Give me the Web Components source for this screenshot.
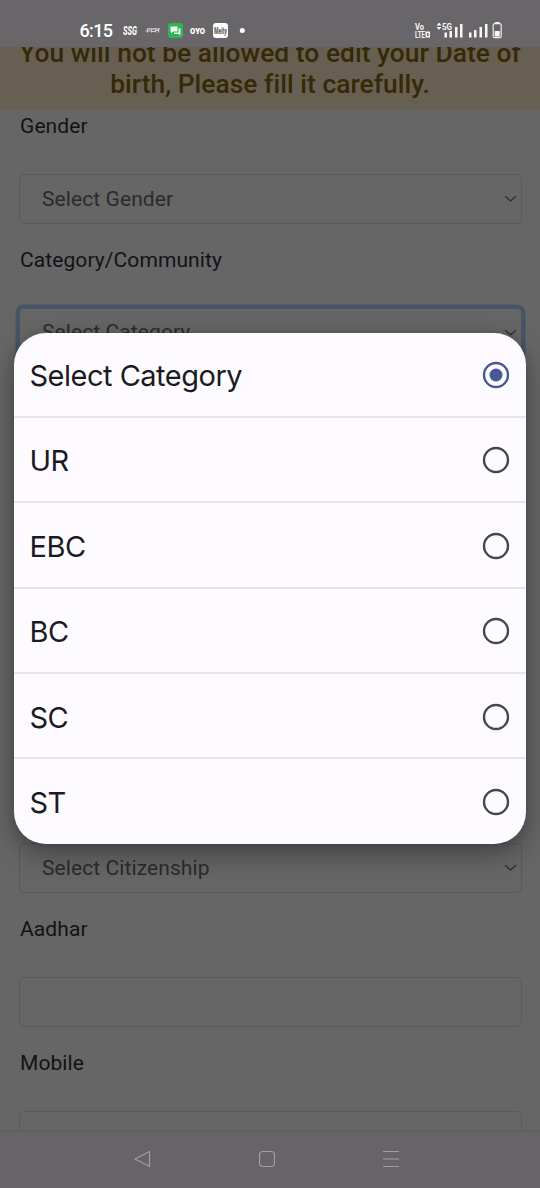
<!DOCTYPE html>
<html lang="en">
<head>
<meta charset="utf-8">
<title>Registration</title>
<style>
html,body{margin:0;height:100%;overflow:hidden;background:#666}
body{font-family:Roboto,"Liberation Sans",sans-serif}
</style>
</head>
<body>
<phone-screen>
  <status-bar slot="status"></status-bar>
  <notice-banner><span>You will not be allowed to edit your Date of</span><span slot="second">birth, Please fill it carefully.</span></notice-banner>
  <form-field label="Gender" arrow>Select Gender</form-field>
  <form-field label="Category/Community" arrow focused class="category">Select Category</form-field>
  <form-field class="citizenship" arrow>Select Citizenship</form-field>
  <form-field label="Aadhar"></form-field>
  <form-field label="Mobile"></form-field>
  <option-dialog slot="dialog">
    <option-row checked>Select Category</option-row>
    <option-row>UR</option-row>
    <option-row>EBC</option-row>
    <option-row>BC</option-row>
    <option-row>SC</option-row>
    <option-row>ST</option-row>
  </option-dialog>
  <nav-bar slot="nav"></nav-bar>
</phone-screen>
<script>
function define(name, html) {
  customElements.define(name, class extends HTMLElement {
    constructor() {
      super();
      const t = document.createElement('template');
      t.innerHTML = html;
      this.attachShadow({mode: 'open'}).append(t.content.cloneNode(true));
    }
  });
}

define('phone-screen', `<style>
:host{display:flex;flex-direction:column;position:relative;width:540px;height:1188px;overflow:hidden;background:#666}
main{flex:1;min-height:0;overflow:hidden}
::slotted(.citizenship){margin-top:465px}
</style>
<slot name="status"></slot><main><slot></slot></main><slot name="nav"></slot><slot name="dialog"></slot>`);

define('status-bar', `<style>
:host{display:flex;box-sizing:border-box;flex:none;height:47px;background:#69666a;color:#fff;padding:15px 38px 0 79.500px;justify-content:space-between}
div{display:flex;height:31px}
.time{font-size:18px;line-height:32px;height:31px;font-weight:500;letter-spacing:-.65px;width:43.500px}
svg{display:block;flex:none}
</style>
<div><span class="time">6:15</span>
<svg width="140" height="31" fill="#fff">
<text x="0" y="20" font-family="Roboto" font-style="italic" font-weight="700" font-size="12" textLength="14" lengthAdjust="spacingAndGlyphs">SSG</text>
<g stroke="#d0ced0" stroke-width="1.200" fill="none"><path d="M24 13.800H37M24.500 14v3.500M28.500 14v3.500M32.500 14v3.500M35.500 14v3.500M22.500 16h5M29 16.500h3M33 15.500h3"/></g>
<rect x="45" y="8" width="15" height="15" rx="3" fill="#2fb455"/>
<path d="M47.500 11.500h7v5h-4.500l-2 2v-2h-.5zM55.500 13.500h2v7l-2-1.500h-4.500v-1.500h4.500z" fill="#e9fbee"/>
<text x="67" y="18.500" font-family="Inter" font-weight="900" font-size="7.500" textLength="15" lengthAdjust="spacingAndGlyphs">OYO</text>
<rect x="90" y="8" width="15" height="15" rx="3"/>
<text x="91" y="19" font-family="Roboto" font-weight="900" font-size="9" fill="#666" textLength="13" lengthAdjust="spacingAndGlyphs">Meity</text>
<circle cx="119.300" cy="15.500" r="2.500"/>
</svg></div>
<div><svg width="88" height="31" fill="#f7f6f7">
<g font-family="Roboto" font-weight="700">
<text x="1" y="15" font-size="8.500" textLength="9" lengthAdjust="spacingAndGlyphs">Vo</text>
<text x="1" y="22.500" font-size="8.500" textLength="10" lengthAdjust="spacingAndGlyphs">LTE</text>
<text x="28" y="15" font-size="9.500" textLength="10" lengthAdjust="spacingAndGlyphs">5G</text></g>
<path fill-rule="evenodd" d="M11.500 16.500h4.500v6h-4.500zM13 18v3h1.500v-3zM22.500 10.500l2.500-3 2.500 3zM22.500 12h5l-2.500 3zM30.500 17.500h2.500v5h-2.500zM35.500 16h2.500v6.500h-2.500zM41 12h2.500v10.500H41zM46 9h2.500v13.500H46zM55 17.500h2.500v5H55zM60 15h2.500v7.500H60zM65.500 12h2.500v10.500h-2.500zM71 9h2.500v13.500H71z"/>
<rect x="79.200" y="8.700" width="8" height="14" rx="1.500" fill="none" stroke="#eeecee" stroke-width="1.200"/><path d="M81 7h4.500v1.500H81zM80.700 16h5v5.500h-5z"/>
</svg></div>`);

define('notice-banner', `<style>
:host{display:block;height:63px;background:#676052;color:#362908;font-size:26.400px;font-weight:500;letter-spacing:.02px;line-height:31px;text-align:center;overflow:hidden;white-space:nowrap}
div{margin-top:-9px;height:31px}
div+div{margin-top:0}
</style><div><slot></slot></div><div><slot name="second"></slot></div>`);

customElements.define('form-field', class extends HTMLElement {
  connectedCallback() {
    const label = this.getAttribute('label');
    const focused = this.hasAttribute('focused');
    this.attachShadow({mode: 'open'}).innerHTML = `<style>
:host{display:block;padding:0 18.500px 20px 19px;color:#121315}
label{display:block;height:64px;padding-left:1px;font-size:21px;line-height:32px;letter-spacing:.09px}
.box{box-sizing:border-box;height:50px;border:1.500px solid #595a5b;border-radius:5px;display:flex;align-items:center;justify-content:space-between;padding:0 4px 0 22px;font-size:21px;line-height:30px;letter-spacing:.09px;color:#292b2d}
.focus{border-color:#485766;box-shadow:0 0 0 3.500px #465565}
.focus span{margin-top:-2px}
.focus svg{margin-top:-1px}
svg{display:block}
</style>${label ? `<label>${label}</label>` : ''}
<div class="box${focused ? ' focus' : ''}"><span><slot></slot></span>${this.hasAttribute('arrow') ? '<svg width="13" height="8" fill="none" stroke="#303235" stroke-width="1.400" stroke-linecap="round" stroke-linejoin="round"><path d="M1.500 1.500l5 4.500 5-4.500"/></svg>' : ''}</div>`;
  }
});

define('option-dialog', `<style>
:host{position:absolute;left:14px;top:332.500px;width:512px;height:511.500px;box-sizing:border-box;border-radius:32px;background:#fdfbff;overflow:hidden;display:grid;grid-template-rows:repeat(5,85.400px) 1fr;box-shadow:0 10px 28px rgba(0,0,0,.34),0 2px 8px rgba(0,0,0,.1)}
::slotted(:not(:last-child)){border-bottom:2px solid #e6e4e8}
</style><slot></slot>`);

customElements.define('option-row', class extends HTMLElement {
  connectedCallback() {
    const on = this.hasAttribute('checked');
    this.attachShadow({mode: 'open'}).innerHTML = `<style>
:host{display:flex;box-sizing:border-box;align-items:center;justify-content:space-between;padding:1.500px 16px 0 15.500px;color:#1b1b1f;font:400 29px/40px Inter,"Liberation Sans",sans-serif;letter-spacing:-.5px}
span{padding-top:2px}
svg{display:block}
</style><span><slot></slot></span><svg width="28" height="28" fill="none"><circle cx="14" cy="14" r="12" stroke="${on ? '#485892' : '#47464b'}" stroke-width="2.400"/>${on ? '<circle cx="14" cy="14" r="6.500" fill="#485892"/>' : ''}</svg>`;
  }
});

define('nav-bar', `<style>
:host{display:flex;box-sizing:border-box;height:58px;flex:none;background:#676468;border-top:2px solid #606066;align-items:center;padding:0 140px 2px 133px;justify-content:space-between}
svg{display:block}
</style>
<svg width="18" height="18" fill="none" stroke="#a09ea1" stroke-width="1.200" stroke-linejoin="round"><path d="M16.500 1.500v15L2 9z"/></svg>
<svg width="18" height="18" fill="none" stroke="#a09ea1" stroke-width="1.200"><rect x="1.500" y="1.500" width="15" height="15" rx="3.500"/></svg>
<svg width="18" height="18" fill="none" stroke="#a09ea1" stroke-width="1.200" stroke-linecap="round"><path d="M1.500 1.500h15M1.500 9h15M1.500 16.500h15"/></svg>`);
</script>
</body>
</html>
